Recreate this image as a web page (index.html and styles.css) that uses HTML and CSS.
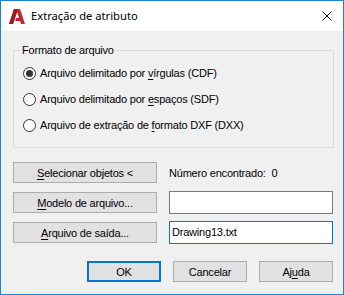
FILE: index.html
```html
<!DOCTYPE html>
<html lang="pt">
<head>
<meta charset="UTF-8">
<meta name="viewport" content="width=device-width, initial-scale=1.0">
<title>Extração de atributo</title>
<link rel="stylesheet" href="styles.css">
</head>
<body>
<div class="dlg">
    <div class="dlg-title">
        <svg class="dlg-logo" width="16" height="15" viewBox="0 0 16 15">
            <path d="M5 0 L11 0 L16 15 L12 15 L11 12 L6 12 L7.2 9 L10 9 L8 3 L4 15 L0 15 Z" fill="#c4262e"/>
            <path d="M5 0 L8 0 L8 3 L4 15 L0 15 Z" fill="#9b1b22"/>
        </svg>
        <span class="dlg-caption">Extração de atributo</span>
        <svg class="dlg-close" width="10" height="10" viewBox="0 0 10 10">
            <path d="M0.5 0.5 L9.5 9.5 M9.5 0.5 L0.5 9.5" stroke="#000" stroke-width="1"/>
        </svg>
    </div>

    <div class="dlg-body">
        <fieldset class="group">
            <legend>Formato de arquivo</legend>
            <div class="opt"><span class="radio checked"></span><span>Arquivo delimitado por <u>v</u>írgulas (CDF)</span></div>
            <div class="opt"><span class="radio"></span><span>Arquivo delimitado por <u>e</u>spaços (SDF)</span></div>
            <div class="opt"><span class="radio"></span><span>Arquivo de extração de <u>f</u>ormato DXF (DXX)</span></div>
        </fieldset>

        <div class="fields">
            <button class="btn"><u>S</u>elecionar objetos &lt;</button>
            <div class="found">Número encontrado:&nbsp; 0</div>
            <button class="btn"><u>M</u>odelo de arquivo...</button>
            <div class="field"></div>
            <button class="btn"><u>A</u>rquivo de saída...</button>
            <div class="field active">Drawing13.txt</div>
        </div>

        <div class="actions">
            <button class="btn default">OK</button>
            <button class="btn">Cancelar</button>
            <button class="btn">Aj<u>u</u>da</button>
        </div>
    </div>
</div>
</body>
</html>
```

FILE: styles.css
```css
html, body {
    margin: 0;
    padding: 0;
}

body {
    font-family: "Liberation Sans", Arial, sans-serif;
    font-size: 11px;
    letter-spacing: -0.2px;
    line-height: 16px;
    color: #000;
}

.dlg {
    width: 344px;
    height: 295px;
    box-sizing: border-box;
    border: 1px solid #1883d7;
    background-color: #f0f0f0;
    display: flex;
    flex-direction: column;
}

.dlg-title {
    height: 30px;
    flex-shrink: 0;
    background-color: white;
    display: flex;
    align-items: center;
    font-family: "Noto Sans", sans-serif;
    font-size: 11.2px;
    letter-spacing: 0;
}

.dlg-logo {
    margin-left: 8px;
}

.dlg-caption {
    margin-left: 6px;
    flex: 1;
}

.dlg-close {
    margin-right: 11px;
}

.dlg-body {
    padding: 11px 9px 0 12px;
}

.group {
    margin: 0;
    padding: 2px 0 9px 9px;
    border: 1px solid #dcdcdc;
}

.group legend {
    padding: 0 2px;
    margin-left: -3px;
}

.opt {
    display: flex;
    align-items: center;
    height: 26px;
}

.radio {
    width: 11px;
    height: 11px;
    flex-shrink: 0;
    border: 1px solid #333;
    border-radius: 50%;
    background-color: white;
    margin-right: 4px;
    display: flex;
    align-items: center;
    justify-content: center;
}

.radio.checked::after {
    content: "";
    width: 7px;
    height: 7px;
    border-radius: 50%;
    background-color: #333;
}

u {
    text-decoration-thickness: 1px;
    text-underline-offset: 2px;
}

.fields {
    margin-top: 13px;
    display: grid;
    grid-template-columns: 144px 164px;
    grid-auto-rows: 23px;
    column-gap: 12px;
    row-gap: 7px;
    align-items: center;
}

.btn {
    font: inherit;
    letter-spacing: inherit;
    color: #000;
    height: 21px;
    padding: 0;
    background-color: #e1e1e1;
    border: 1px solid #adadad;
}

.btn.default {
    border: 2px solid #0078d7;
}

.field {
    height: 23px;
    box-sizing: border-box;
    border: 1px solid #7a7a7a;
    background-color: white;
    padding: 2px 2px;
}

.field.active {
    border-color: #0078d7;
}

.actions {
    margin-top: 17px;
    padding-right: 1px;
    display: flex;
    justify-content: flex-end;
    gap: 12px;
}

.actions .btn {
    width: 74px;
}
```
